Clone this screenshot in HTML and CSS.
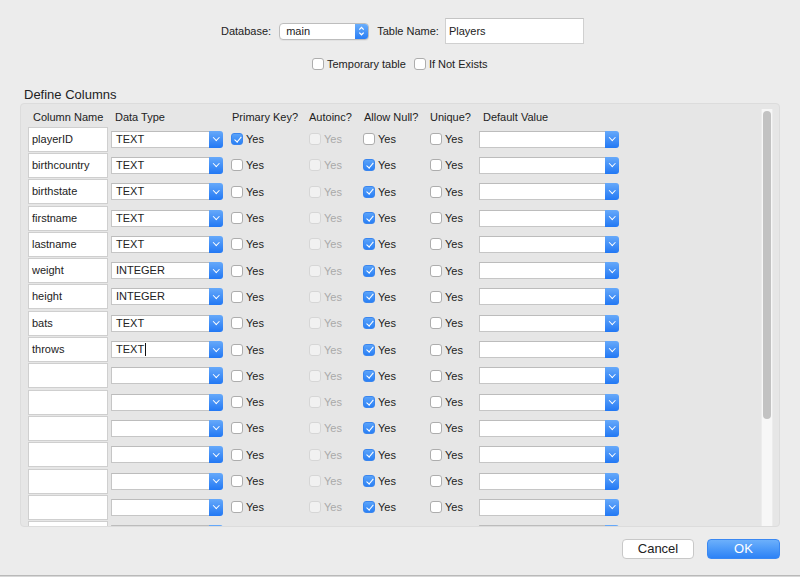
FILE: index.html
```html
<!DOCTYPE html>
<html>
<head>
<meta charset="utf-8">
<link rel="stylesheet" href="styles.css">
</head>
<body>
<div class="dialog">
  <div class="top-row">
    <span class="lbl">Database:</span>
    <div class="popup">
      <span class="popup-val">main</span>
      <span class="stepper"><svg width="13" height="16" viewBox="0 0 13 16"><polyline points="4.3,6.6 6.5,4.4 8.7,6.6" fill="none" stroke="#fff" stroke-width="1.3"/><polyline points="4.3,9.6 6.5,11.8 8.7,9.6" fill="none" stroke="#fff" stroke-width="1.3"/></svg></span>
    </div>
    <span class="lbl lbl-tn">Table Name:</span>
    <div class="textfield">Players</div>
  </div>
  <div class="opts-row">
    <label class="chk"><span class="box"></span>Temporary table</label>
    <label class="chk"><span class="box"></span>If Not Exists</label>
  </div>
  <div class="section-title">Define Columns</div>
  <div class="panel">
    <div class="grid">
      <div class="hd hd-name">Column Name</div>
      <div class="hd hd-type">Data Type</div>
      <div class="hd hd-pk">Primary Key?</div>
      <div class="hd">Autoinc?</div>
      <div class="hd hd-null">Allow Null?</div>
      <div class="hd">Unique?</div>
      <div class="hd hd-def">Default Value</div>

      <div class="name">playerID</div>
      <div class="cell"><div class="combo"><span class="val">TEXT</span><span class="btn"></span></div></div>
      <div class="cell"><label class="chk"><span class="box on"></span>Yes</label></div>
      <div class="cell"><label class="chk dis"><span class="box"></span>Yes</label></div>
      <div class="cell"><label class="chk"><span class="box"></span>Yes</label></div>
      <div class="cell"><label class="chk"><span class="box"></span>Yes</label></div>
      <div class="cell"><div class="combo wide"><span class="val"></span><span class="btn"></span></div></div>

      <div class="name">birthcountry</div>
      <div class="cell"><div class="combo"><span class="val">TEXT</span><span class="btn"></span></div></div>
      <div class="cell"><label class="chk"><span class="box"></span>Yes</label></div>
      <div class="cell"><label class="chk dis"><span class="box"></span>Yes</label></div>
      <div class="cell"><label class="chk"><span class="box on"></span>Yes</label></div>
      <div class="cell"><label class="chk"><span class="box"></span>Yes</label></div>
      <div class="cell"><div class="combo wide"><span class="val"></span><span class="btn"></span></div></div>

      <div class="name">birthstate</div>
      <div class="cell"><div class="combo"><span class="val">TEXT</span><span class="btn"></span></div></div>
      <div class="cell"><label class="chk"><span class="box"></span>Yes</label></div>
      <div class="cell"><label class="chk dis"><span class="box"></span>Yes</label></div>
      <div class="cell"><label class="chk"><span class="box on"></span>Yes</label></div>
      <div class="cell"><label class="chk"><span class="box"></span>Yes</label></div>
      <div class="cell"><div class="combo wide"><span class="val"></span><span class="btn"></span></div></div>

      <div class="name">firstname</div>
      <div class="cell"><div class="combo"><span class="val">TEXT</span><span class="btn"></span></div></div>
      <div class="cell"><label class="chk"><span class="box"></span>Yes</label></div>
      <div class="cell"><label class="chk dis"><span class="box"></span>Yes</label></div>
      <div class="cell"><label class="chk"><span class="box on"></span>Yes</label></div>
      <div class="cell"><label class="chk"><span class="box"></span>Yes</label></div>
      <div class="cell"><div class="combo wide"><span class="val"></span><span class="btn"></span></div></div>

      <div class="name">lastname</div>
      <div class="cell"><div class="combo"><span class="val">TEXT</span><span class="btn"></span></div></div>
      <div class="cell"><label class="chk"><span class="box"></span>Yes</label></div>
      <div class="cell"><label class="chk dis"><span class="box"></span>Yes</label></div>
      <div class="cell"><label class="chk"><span class="box on"></span>Yes</label></div>
      <div class="cell"><label class="chk"><span class="box"></span>Yes</label></div>
      <div class="cell"><div class="combo wide"><span class="val"></span><span class="btn"></span></div></div>

      <div class="name">weight</div>
      <div class="cell"><div class="combo"><span class="val">INTEGER</span><span class="btn"></span></div></div>
      <div class="cell"><label class="chk"><span class="box"></span>Yes</label></div>
      <div class="cell"><label class="chk dis"><span class="box"></span>Yes</label></div>
      <div class="cell"><label class="chk"><span class="box on"></span>Yes</label></div>
      <div class="cell"><label class="chk"><span class="box"></span>Yes</label></div>
      <div class="cell"><div class="combo wide"><span class="val"></span><span class="btn"></span></div></div>

      <div class="name">height</div>
      <div class="cell"><div class="combo"><span class="val">INTEGER</span><span class="btn"></span></div></div>
      <div class="cell"><label class="chk"><span class="box"></span>Yes</label></div>
      <div class="cell"><label class="chk dis"><span class="box"></span>Yes</label></div>
      <div class="cell"><label class="chk"><span class="box on"></span>Yes</label></div>
      <div class="cell"><label class="chk"><span class="box"></span>Yes</label></div>
      <div class="cell"><div class="combo wide"><span class="val"></span><span class="btn"></span></div></div>

      <div class="name">bats</div>
      <div class="cell"><div class="combo"><span class="val">TEXT</span><span class="btn"></span></div></div>
      <div class="cell"><label class="chk"><span class="box"></span>Yes</label></div>
      <div class="cell"><label class="chk dis"><span class="box"></span>Yes</label></div>
      <div class="cell"><label class="chk"><span class="box on"></span>Yes</label></div>
      <div class="cell"><label class="chk"><span class="box"></span>Yes</label></div>
      <div class="cell"><div class="combo wide"><span class="val"></span><span class="btn"></span></div></div>

      <div class="name">throws</div>
      <div class="cell"><div class="combo"><span class="val">TEXT<span class="caret"></span></span><span class="btn"></span></div></div>
      <div class="cell"><label class="chk"><span class="box"></span>Yes</label></div>
      <div class="cell"><label class="chk dis"><span class="box"></span>Yes</label></div>
      <div class="cell"><label class="chk"><span class="box on"></span>Yes</label></div>
      <div class="cell"><label class="chk"><span class="box"></span>Yes</label></div>
      <div class="cell"><div class="combo wide"><span class="val"></span><span class="btn"></span></div></div>

      <div class="name"></div>
      <div class="cell"><div class="combo"><span class="val"></span><span class="btn"></span></div></div>
      <div class="cell"><label class="chk"><span class="box"></span>Yes</label></div>
      <div class="cell"><label class="chk dis"><span class="box"></span>Yes</label></div>
      <div class="cell"><label class="chk"><span class="box on"></span>Yes</label></div>
      <div class="cell"><label class="chk"><span class="box"></span>Yes</label></div>
      <div class="cell"><div class="combo wide"><span class="val"></span><span class="btn"></span></div></div>

      <div class="name"></div>
      <div class="cell"><div class="combo"><span class="val"></span><span class="btn"></span></div></div>
      <div class="cell"><label class="chk"><span class="box"></span>Yes</label></div>
      <div class="cell"><label class="chk dis"><span class="box"></span>Yes</label></div>
      <div class="cell"><label class="chk"><span class="box on"></span>Yes</label></div>
      <div class="cell"><label class="chk"><span class="box"></span>Yes</label></div>
      <div class="cell"><div class="combo wide"><span class="val"></span><span class="btn"></span></div></div>

      <div class="name"></div>
      <div class="cell"><div class="combo"><span class="val"></span><span class="btn"></span></div></div>
      <div class="cell"><label class="chk"><span class="box"></span>Yes</label></div>
      <div class="cell"><label class="chk dis"><span class="box"></span>Yes</label></div>
      <div class="cell"><label class="chk"><span class="box on"></span>Yes</label></div>
      <div class="cell"><label class="chk"><span class="box"></span>Yes</label></div>
      <div class="cell"><div class="combo wide"><span class="val"></span><span class="btn"></span></div></div>

      <div class="name"></div>
      <div class="cell"><div class="combo"><span class="val"></span><span class="btn"></span></div></div>
      <div class="cell"><label class="chk"><span class="box"></span>Yes</label></div>
      <div class="cell"><label class="chk dis"><span class="box"></span>Yes</label></div>
      <div class="cell"><label class="chk"><span class="box on"></span>Yes</label></div>
      <div class="cell"><label class="chk"><span class="box"></span>Yes</label></div>
      <div class="cell"><div class="combo wide"><span class="val"></span><span class="btn"></span></div></div>

      <div class="name"></div>
      <div class="cell"><div class="combo"><span class="val"></span><span class="btn"></span></div></div>
      <div class="cell"><label class="chk"><span class="box"></span>Yes</label></div>
      <div class="cell"><label class="chk dis"><span class="box"></span>Yes</label></div>
      <div class="cell"><label class="chk"><span class="box on"></span>Yes</label></div>
      <div class="cell"><label class="chk"><span class="box"></span>Yes</label></div>
      <div class="cell"><div class="combo wide"><span class="val"></span><span class="btn"></span></div></div>

      <div class="name"></div>
      <div class="cell"><div class="combo"><span class="val"></span><span class="btn"></span></div></div>
      <div class="cell"><label class="chk"><span class="box"></span>Yes</label></div>
      <div class="cell"><label class="chk dis"><span class="box"></span>Yes</label></div>
      <div class="cell"><label class="chk"><span class="box on"></span>Yes</label></div>
      <div class="cell"><label class="chk"><span class="box"></span>Yes</label></div>
      <div class="cell"><div class="combo wide"><span class="val"></span><span class="btn"></span></div></div>

      <div class="name"></div>
      <div class="cell"><div class="combo"><span class="val"></span><span class="btn"></span></div></div>
      <div class="cell"></div>
      <div class="cell"></div>
      <div class="cell"></div>
      <div class="cell"></div>
      <div class="cell"><div class="combo wide"><span class="val"></span><span class="btn"></span></div></div>
    </div>
    <div class="scrollbar"><div class="thumb"></div></div>
  </div>
  <div class="buttons">
    <button class="btn-cancel">Cancel</button>
    <button class="btn-ok">OK</button>
  </div>
</div>
<div class="window-edge"></div>
</body>
</html>
```

FILE: styles.css
```css
html, body {
  margin: 0;
  padding: 0;
}
body {
  width: 800px;
  height: 577px;
  overflow: hidden;
  background: #ececec;
  font-family: "Liberation Sans", Arial, Helvetica, sans-serif;
  font-size: 11px;
  color: #222;
}
.dialog {
  height: 575px;
  box-sizing: border-box;
  padding-top: 18px;
  display: flex;
  flex-direction: column;
}
.top-row {
  display: flex;
  align-items: center;
  height: 26px;
  padding-left: 221px;
}
.lbl {
  margin-right: 8px;
}
.lbl-tn {
  margin-left: 8px;
  margin-right: 6px;
}
.popup {
  display: flex;
  width: 90px;
  height: 17px;
  box-sizing: border-box;
  border: 1px solid #bdbdbd;
  border-radius: 4px;
  background: #fff;
  overflow: hidden;
  box-shadow: 0 1px 0 rgba(0,0,0,0.04);
}
.popup-val {
  flex: 1;
  padding-left: 6px;
  line-height: 15px;
  color: #222;
}
.stepper {
  width: 13px;
  display: flex;
  align-items: center;
  justify-content: center;
  background: linear-gradient(#6aaefb, #2a7ef5);
}
.textfield {
  width: 139px;
  height: 26px;
  box-sizing: border-box;
  border: 1px solid #d0d0d0;
  border-top-color: #c4c4c4;
  background: #fff;
  padding-left: 3px;
  line-height: 24px;
  color: #222;
}
.opts-row {
  display: flex;
  padding-left: 312px;
  gap: 8px;
  margin-top: 14px;
  height: 12px;
}
.chk {
  display: flex;
  align-items: center;
  gap: 3px;
  line-height: 12px;
  color: #222;
}
.box {
  position: relative;
  width: 12px;
  height: 12px;
  box-sizing: border-box;
  border: 1px solid #adadad;
  border-radius: 3px;
  background: #fff;
  flex: none;
}
.box.on {
  border-color: #3a86ef;
  background: linear-gradient(#5aa3fa, #2a80f5);
}
.box.on::after {
  content: "";
  position: absolute;
  left: 3.5px;
  top: 0.5px;
  width: 2.5px;
  height: 6px;
  border-right: 1.6px solid #fff;
  border-bottom: 1.6px solid #fff;
  transform: rotate(40deg);
}
.chk.dis {
  color: #a9a9a9;
}
.chk.dis .box {
  border-color: #d6d6d6;
  background: #f1f1f1;
}
.section-title {
  margin-top: 16px;
  padding-left: 24px;
  font-size: 13px;
  line-height: 17px;
  color: #222;
}
.panel {
  margin: 0 0 0 20px;
  width: 760px;
  height: 424px;
  box-sizing: border-box;
  border: 1px solid #dcdcdc;
  border-radius: 4px;
  background: #e6e6e6;
  display: flex;
  overflow: hidden;
}
.grid {
  padding: 4px 0 0 7px;
  display: grid;
  grid-template-columns: 83px 120px 78px 54px 67px 49px 140px;
  grid-template-rows: 18.7px;
  grid-auto-rows: 26.3px;
  align-items: start;
}
.hd {
  align-self: center;
  white-space: nowrap;
  color: #222;
}
.hd-name { padding-left: 5px; }
.hd-type { padding-left: 4px; }
.hd-pk { padding-left: 1px; }
.hd-null { padding-left: 1px; }
.hd-def { padding-left: 4px; }
.name {
  width: 80px;
  height: 25px;
  box-sizing: border-box;
  border: 1px solid #cfcfcf;
  background: #fff;
  padding-left: 3px;
  line-height: 23px;
  color: #222;
}
.cell {
  height: 25px;
  display: flex;
  align-items: center;
}
.combo {
  width: 112px;
  height: 17px;
  display: flex;
}
.combo.wide {
  width: 140px;
}
.combo .val {
  flex: 1;
  box-sizing: border-box;
  border: 1px solid #c6c6c6;
  border-top-color: #bcbcbc;
  border-right: none;
  background: #fff;
  padding-left: 4px;
  line-height: 15px;
  color: #222;
  display: flex;
  align-items: center;
}
.caret {
  display: inline-block;
  width: 1px;
  height: 13px;
  background: #111;
  margin-left: 1px;
}
.combo .btn {
  position: relative;
  width: 14px;
  border-radius: 0 3px 3px 0;
  background: linear-gradient(#66a9fa, #2278f4);
}
.combo .btn::after {
  content: "";
  position: absolute;
  left: 4.5px;
  top: 4.5px;
  width: 3.5px;
  height: 3.5px;
  border-right: 1.4px solid #fff;
  border-bottom: 1.4px solid #fff;
  transform: rotate(45deg);
}
.scrollbar {
  margin: 5px 6px 0 auto;
  width: 12px;
  box-sizing: border-box;
  background: #f7f7f7;
  border-left: 1px solid #ececec;
  border-right: 1px solid #ececec;
  padding: 2px 1px 0 1px;
}
.thumb {
  width: 8px;
  height: 308px;
  border-radius: 4px;
  background: #c2c2c2;
}
.buttons {
  display: flex;
  justify-content: flex-end;
  gap: 13px;
  margin-top: 12px;
  padding-right: 20px;
}
.buttons button {
  height: 20px;
  border-radius: 4px;
  font-family: "Liberation Sans", Arial, Helvetica, sans-serif;
  font-size: 13px;
  padding: 0;
  line-height: 18px;
}
.btn-cancel {
  width: 72px;
  background: #fff;
  border: 1px solid #c8c8c8;
  color: #222;
}
.btn-ok {
  width: 73px;
  background: linear-gradient(#6cb0fb, #2c82f6);
  border: 1px solid #3a88f2;
  color: #fff;
}
.window-edge {
  height: 1px;
  background: #b9b9b9;
  border-bottom: 1px solid #d8d8d8;
}
```
